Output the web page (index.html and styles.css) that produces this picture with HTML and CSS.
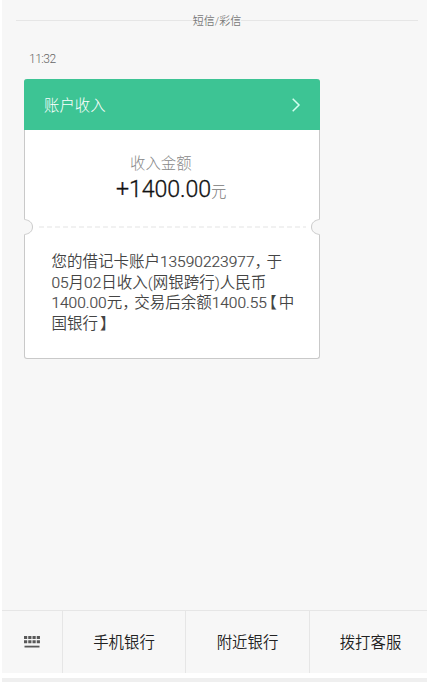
FILE: index.html
```html
<!DOCTYPE html>
<html lang="zh-CN">
<head>
<meta charset="utf-8">
<title>短信/彩信</title>
<link rel="stylesheet" href="styles.css">
</head>
<body>
<div class="screen">
  <main class="thread">
    <div class="divider"><span>短信/彩信</span></div>
    <time class="time">11:32</time>
    <article class="card">
      <header class="card-head">
        <span>账户收入</span>
        <svg class="chevron" width="10" height="16" viewBox="0 0 10 16"><path d="M1.7 1.8 L8 8 L1.7 14.2"/></svg>
      </header>
      <section class="amount">
        <div class="label">收入金额</div>
        <div class="value">+1400.00<span class="unit">元</span></div>
      </section>
      <div class="tear">
        <svg width="9" height="18" viewBox="0 0 9 18"><path class="fill" d="M0 1 C1 2 8.5 2.5 8.5 9 S1 16 0 17Z"/><path class="edge" d="M.5 0 V1.3 C2 2 8.5 2.5 8.5 9 S2 16 .5 16.7 V18"/></svg>
        <svg class="dashes" width="267" height="2" viewBox="0 0 267 2"><path d="M0 1H267"/></svg>
        <svg class="flip" width="9" height="18" viewBox="0 0 9 18"><path class="fill" d="M0 1 C1 2 8.5 2.5 8.5 9 S1 16 0 17Z"/><path class="edge" d="M.5 0 V1.3 C2 2 8.5 2.5 8.5 9 S2 16 .5 16.7 V18"/></svg>
      </div>
      <p class="message">您的借记卡账户<span class="num">13590223977</span><span class="comma">，</span>于<br><span class="num">05</span>月<span class="num">02</span>日收入(网银跨行)人民币<br><span class="num">1400.00</span>元<span class="comma">，</span>交易后余额<span class="num">1400.55</span><span class="bracket">【</span>中<br>国银行<span class="bracket">】</span></p>
    </article>
  </main>
  <nav class="menu">
    <div class="keys">
      <svg width="16" height="12" viewBox="0 0 16 12"><path d="M0 1.6H16M0 5.7H16" stroke-width="3" stroke-dasharray="3.2 1.05"/><path d="M.5 10.6H15.5" stroke-width="1.8"/></svg>
    </div>
    <div class="item">手机银行</div>
    <div class="item">附近银行</div>
    <div class="item last">拨打客服</div>
  </nav>
</div>
</body>
</html>
```
FILE: styles.css
```css
* { box-sizing: border-box; }
body {
  margin: 0;
  height: 682px;
  overflow: hidden;
  background: #fff;
  font-family: Roboto, "Noto Sans CJK SC", sans-serif;
  font-weight: 300;
}
.screen {
  height: 682px;
  margin-left: 2px;
  border-bottom: 4px solid #efefef;
}
.thread {
  height: 610px;
  padding-top: 10px;
  background: #f7f7f7;
}
.divider {
  display: flex;
  align-items: center;
  height: 20px;
  margin: 0 9px 0 14px;
  font-size: 11px;
  font-weight: 350;
  color: #777;
}
.divider::before, .divider::after {
  content: "";
  flex: 1;
  height: 1px;
  background: #e6e6e6;
}
.time {
  display: block;
  height: 20px;
  margin: 19px 0 0 27px;
  font-size: 12px;
  line-height: 20px;
  letter-spacing: -.5px;
  color: #666;
}
.card {
  width: 296px;
  height: 280px;
  margin: 10px 0 0 22px;
  border: 1px solid #c9c9c9;
  border-top: 0;
  border-radius: 3px;
  background: #fff;
}
.card-head {
  display: flex;
  align-items: center;
  justify-content: space-between;
  height: 51px;
  margin: 0 -1px;
  padding: 0 19px 0 20px;
  border-radius: 3px 3px 0 0;
  background: #3dc494;
  color: #fff;
  font-family: "Noto Sans CJK SC", sans-serif;
  font-size: 15.4px;
  line-height: 21px;
}
.chevron { fill: none; stroke: #d5fff0; stroke-width: 1.5; }
.amount { height: 88px; padding-top: 23px; }
.label {
  padding-left: 105px;
  font-size: 15.4px;
  line-height: 22px;
  color: #888;
}
.value {
  padding-left: 91px;
  font-size: 23.2px;
  line-height: 28px;
  letter-spacing: -.1px;
  color: #111;
  -webkit-text-stroke: .3px #111;
  white-space: nowrap;
}
.unit {
  font-size: 15.4px;
  letter-spacing: 0;
  color: #777;
  -webkit-text-stroke: 0;
}
.tear {
  display: flex;
  align-items: center;
  justify-content: space-between;
  height: 18px;
  margin: 0 -1px;
}
.fill { fill: #f7f7f7; }
.edge { fill: none; stroke: #cbcbcb; }
.flip { transform: scaleX(-1); }
.dashes path { stroke: #e4e4e4; stroke-width: 1.1; stroke-dasharray: 5 3; }
.message {
  margin: 16px 0 0 26.4px;
  font-size: 15.5px;
  line-height: 20.7px;
  font-weight: 350;
  color: #444;
  white-space: nowrap;
}
.num { -webkit-text-stroke: .2px #444; }
.comma, .bracket { font-feature-settings: "halt"; }
.comma { padding-right: 4.2px; }
.bracket { padding: 0 2px; }
.menu {
  display: grid;
  grid-template-columns: 61px 123px 124px 1fr;
  height: 63px;
  border-top: 1px solid #e6e6e6;
  background: #f7f7f7;
  font-size: 15.4px;
  line-height: 22px;
  font-weight: 350;
  color: #222;
}
.menu > div {
  display: flex;
  align-items: center;
  justify-content: center;
  border-right: 1px solid #e6e6e6;
}
.menu > .item { padding-top: 2px; }
.menu > .last { border: 0; padding-left: 4px; }
.keys svg { fill: none; stroke: #595959; }
```
